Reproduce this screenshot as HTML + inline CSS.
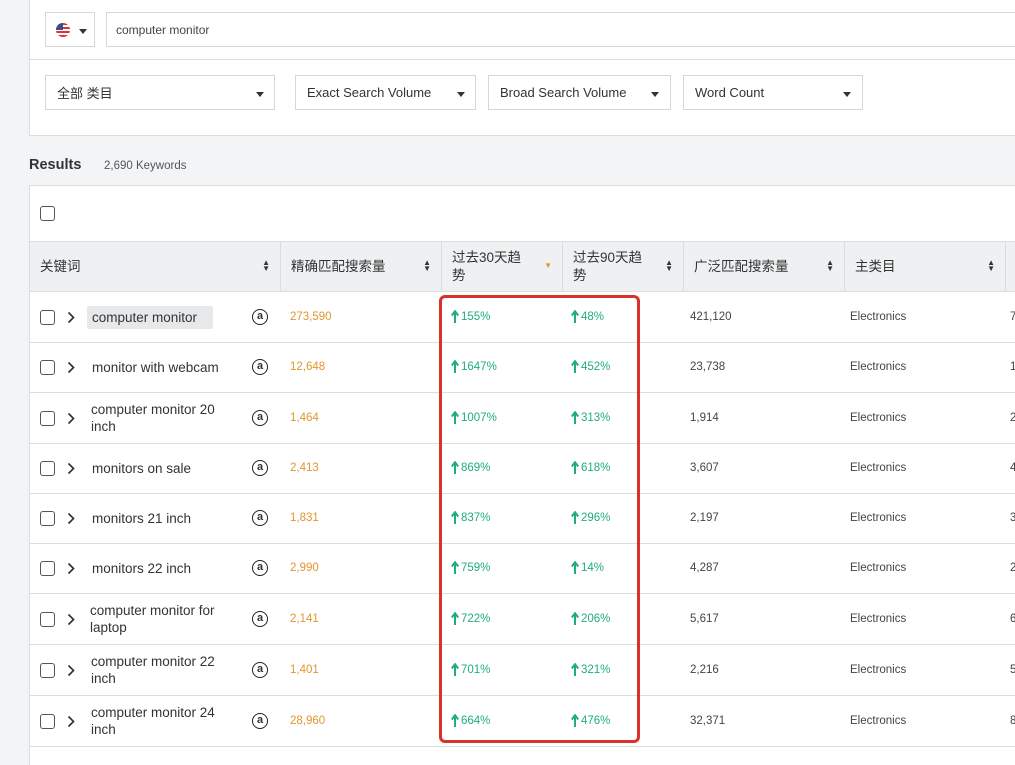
<!DOCTYPE html>
<html><head><meta charset="utf-8"><style>
*{box-sizing:border-box;margin:0;padding:0}
body{width:1015px;height:754px;overflow:hidden;background:#f3f4f6;font-family:"Liberation Sans","Noto Sans CJK SC",sans-serif;color:#333;position:relative}
.abs{position:absolute}
.panel{left:29px;top:-2px;width:1000px;height:138px;background:#fff;border:1px solid #ddd}
.box{position:absolute;background:#fff;border:1px solid #d6d6d6;font-size:13px;color:#333;display:flex;align-items:center;padding-left:11px}
.caret{position:absolute;width:0;height:0;border-left:4px solid transparent;border-right:4px solid transparent;border-top:5px solid #333}
.table{left:29px;top:185px;width:1000px;height:580px;background:#fff;border-left:1px solid #ddd;border-top:1px solid #ddd}
.hdr{left:30px;top:241px;width:990px;height:51px;background:#eef0f2;border-top:1px solid #ddd;border-bottom:1px solid #ddd}
.hc{position:absolute;top:241px;height:51px;border-left:1px solid #dcdcdc;font-size:13.5px;color:#333;padding:6px 10px;display:flex;align-items:center;line-height:18px}
.sort{position:absolute;right:10px;top:19px;font-size:8px;line-height:6px;color:#333}
.row{position:absolute;left:30px;width:990px;border-bottom:1px solid #ddd}
.cb{position:absolute;width:15px;height:15px;border:1.5px solid #555;border-radius:3px;background:#fff}
.t{position:absolute;font-size:13px;white-space:nowrap}
.kw{font-size:13.5px;color:#333;line-height:17px;white-space:normal}
.or{color:#e0962e;font-size:11.5px}
.gr{color:#1fae7a;font-size:11.5px;display:flex;align-items:center;gap:2px}
.gy{color:#444;font-size:11.5px}
.ch{position:absolute;left:67px}
.am{position:absolute;left:252px;width:16px;height:16px;border:1.6px solid #222;border-radius:50%;font-size:11px;font-weight:bold;text-align:center;line-height:12px}
</style></head><body>
<div class="abs panel"></div>
<div class="abs" style="left:30px;top:59px;width:990px;height:1px;background:#ddd"></div>
<div class="box" style="left:45px;top:12px;width:50px;height:35px"></div>
<div class="abs" style="left:56px;top:23px;width:14px;height:14px;border-radius:50%;overflow:hidden;background:repeating-linear-gradient(#d33 0 2px,#fff 2px 4px)"><div style="width:7px;height:7px;background:#3b4c8c"></div></div>
<div class="caret" style="left:79px;top:29px"></div>
<div class="box" style="left:106px;top:12px;width:920px;height:35px;padding-left:9px;font-size:12px;color:#444">computer monitor</div>
<div class="box" style="left:45px;top:75px;width:230px;height:35px;font-size:13px">全部 类目</div>
<div class="caret" style="left:256px;top:92px"></div>
<div class="box" style="left:295px;top:75px;width:181px;height:35px">Exact Search Volume</div>
<div class="caret" style="left:457px;top:92px"></div>
<div class="box" style="left:488px;top:75px;width:183px;height:35px">Broad Search Volume</div>
<div class="caret" style="left:651px;top:92px"></div>
<div class="box" style="left:683px;top:75px;width:180px;height:35px">Word Count</div>
<div class="caret" style="left:843px;top:92px"></div>
<div class="t" style="left:29px;top:157px;font-size:14.5px;font-weight:bold;color:#333">Results</div>
<div class="t" style="left:104px;top:160px;font-size:11.5px;color:#555">2,690 Keywords</div>
<div class="abs table"></div>
<div class="cb" style="left:40px;top:206px"></div>
<div class="abs hdr"></div>
<div class="hc" style="left:30px;width:250px;border-left:none">关键词<span class="sort">▲<br>▼</span></div>
<div class="hc" style="left:280px;width:161px">精确匹配搜索量<span class="sort">▲<br>▼</span></div>
<div class="hc" style="left:441px;width:121px">过去30天趋<br>势<span class="sort" style="color:#e0962e;top:22px">▼</span></div>
<div class="hc" style="left:562px;width:121px;padding-right:28px">过去90天趋<br>势<span class="sort">▲<br>▼</span></div>
<div class="hc" style="left:683px;width:161px">广泛匹配搜索量<span class="sort">▲<br>▼</span></div>
<div class="hc" style="left:844px;width:161px">主类目<span class="sort">▲<br>▼</span></div>
<div class="hc" style="left:1005px;width:20px"></div>

<div class="row" style="top:292px;height:51px"></div>
<div class="row" style="top:343px;height:50px"></div>
<div class="row" style="top:393px;height:51px"></div>
<div class="row" style="top:444px;height:50px"></div>
<div class="row" style="top:494px;height:50px"></div>
<div class="row" style="top:544px;height:50px"></div>
<div class="row" style="top:594px;height:51px"></div>
<div class="row" style="top:645px;height:51px"></div>
<div class="row" style="top:696px;height:51px"></div>

<div class="abs" style="left:87px;top:306px;width:126px;height:23px;background:#e6e8ea;border-radius:2px"></div>

<div class="cb" style="left:40px;top:310px"></div><svg class="ch" style="top:311px" width="8" height="13"><path d="M1.5 1.5L6.5 6.5L1.5 11.5" fill="none" stroke="#333" stroke-width="1.7"/></svg>
<div class="t kw" style="left:92px;top:309px">computer monitor</div>
<div class="cb" style="left:40px;top:360px"></div><svg class="ch" style="top:361px" width="8" height="13"><path d="M1.5 1.5L6.5 6.5L1.5 11.5" fill="none" stroke="#333" stroke-width="1.7"/></svg>
<div class="t kw" style="left:92px;top:359px">monitor with webcam</div>
<div class="cb" style="left:40px;top:411px"></div><svg class="ch" style="top:412px" width="8" height="13"><path d="M1.5 1.5L6.5 6.5L1.5 11.5" fill="none" stroke="#333" stroke-width="1.7"/></svg>
<div class="t kw" style="left:91px;top:401px;width:150px">computer monitor 20 inch</div>
<div class="cb" style="left:40px;top:461px"></div><svg class="ch" style="top:462px" width="8" height="13"><path d="M1.5 1.5L6.5 6.5L1.5 11.5" fill="none" stroke="#333" stroke-width="1.7"/></svg>
<div class="t kw" style="left:92px;top:460px">monitors on sale</div>
<div class="cb" style="left:40px;top:511px"></div><svg class="ch" style="top:512px" width="8" height="13"><path d="M1.5 1.5L6.5 6.5L1.5 11.5" fill="none" stroke="#333" stroke-width="1.7"/></svg>
<div class="t kw" style="left:92px;top:510px">monitors 21 inch</div>
<div class="cb" style="left:40px;top:561px"></div><svg class="ch" style="top:562px" width="8" height="13"><path d="M1.5 1.5L6.5 6.5L1.5 11.5" fill="none" stroke="#333" stroke-width="1.7"/></svg>
<div class="t kw" style="left:92px;top:560px">monitors 22 inch</div>
<div class="cb" style="left:40px;top:612px"></div><svg class="ch" style="top:613px" width="8" height="13"><path d="M1.5 1.5L6.5 6.5L1.5 11.5" fill="none" stroke="#333" stroke-width="1.7"/></svg>
<div class="t kw" style="left:90px;top:602px;width:150px">computer monitor for laptop</div>
<div class="cb" style="left:40px;top:663px"></div><svg class="ch" style="top:664px" width="8" height="13"><path d="M1.5 1.5L6.5 6.5L1.5 11.5" fill="none" stroke="#333" stroke-width="1.7"/></svg>
<div class="t kw" style="left:91px;top:653px;width:150px">computer monitor 22 inch</div>
<div class="cb" style="left:40px;top:714px"></div><svg class="ch" style="top:715px" width="8" height="13"><path d="M1.5 1.5L6.5 6.5L1.5 11.5" fill="none" stroke="#333" stroke-width="1.7"/></svg>
<div class="t kw" style="left:91px;top:704px;width:150px">computer monitor 24 inch</div>

<div class="am" style="top:309px">a</div>
<div class="am" style="top:359px">a</div>
<div class="am" style="top:410px">a</div>
<div class="am" style="top:460px">a</div>
<div class="am" style="top:510px">a</div>
<div class="am" style="top:560px">a</div>
<div class="am" style="top:611px">a</div>
<div class="am" style="top:662px">a</div>
<div class="am" style="top:713px">a</div>

<div class="t or" style="left:290px;top:311px">273,590</div><div class="t gr" style="left:451px;top:310px"><svg width="8" height="13"><path d="M4 13V2M0.8 5.5L4 1.2L7.2 5.5" fill="none" stroke="#1fae7a" stroke-width="2"/></svg>155%</div><div class="t gr" style="left:571px;top:310px"><svg width="8" height="13"><path d="M4 13V2M0.8 5.5L4 1.2L7.2 5.5" fill="none" stroke="#1fae7a" stroke-width="2"/></svg>48%</div><div class="t gy" style="left:690px;top:311px">421,120</div><div class="t gy" style="left:850px;top:311px">Electronics</div><div class="t gy" style="left:1010px;top:311px">7</div>
<div class="t or" style="left:290px;top:361px">12,648</div><div class="t gr" style="left:451px;top:360px"><svg width="8" height="13"><path d="M4 13V2M0.8 5.5L4 1.2L7.2 5.5" fill="none" stroke="#1fae7a" stroke-width="2"/></svg>1647%</div><div class="t gr" style="left:571px;top:360px"><svg width="8" height="13"><path d="M4 13V2M0.8 5.5L4 1.2L7.2 5.5" fill="none" stroke="#1fae7a" stroke-width="2"/></svg>452%</div><div class="t gy" style="left:690px;top:361px">23,738</div><div class="t gy" style="left:850px;top:361px">Electronics</div><div class="t gy" style="left:1010px;top:361px">1</div>
<div class="t or" style="left:290px;top:412px">1,464</div><div class="t gr" style="left:451px;top:411px"><svg width="8" height="13"><path d="M4 13V2M0.8 5.5L4 1.2L7.2 5.5" fill="none" stroke="#1fae7a" stroke-width="2"/></svg>1007%</div><div class="t gr" style="left:571px;top:411px"><svg width="8" height="13"><path d="M4 13V2M0.8 5.5L4 1.2L7.2 5.5" fill="none" stroke="#1fae7a" stroke-width="2"/></svg>313%</div><div class="t gy" style="left:690px;top:412px">1,914</div><div class="t gy" style="left:850px;top:412px">Electronics</div><div class="t gy" style="left:1010px;top:412px">2</div>
<div class="t or" style="left:290px;top:462px">2,413</div><div class="t gr" style="left:451px;top:461px"><svg width="8" height="13"><path d="M4 13V2M0.8 5.5L4 1.2L7.2 5.5" fill="none" stroke="#1fae7a" stroke-width="2"/></svg>869%</div><div class="t gr" style="left:571px;top:461px"><svg width="8" height="13"><path d="M4 13V2M0.8 5.5L4 1.2L7.2 5.5" fill="none" stroke="#1fae7a" stroke-width="2"/></svg>618%</div><div class="t gy" style="left:690px;top:462px">3,607</div><div class="t gy" style="left:850px;top:462px">Electronics</div><div class="t gy" style="left:1010px;top:462px">4</div>
<div class="t or" style="left:290px;top:512px">1,831</div><div class="t gr" style="left:451px;top:511px"><svg width="8" height="13"><path d="M4 13V2M0.8 5.5L4 1.2L7.2 5.5" fill="none" stroke="#1fae7a" stroke-width="2"/></svg>837%</div><div class="t gr" style="left:571px;top:511px"><svg width="8" height="13"><path d="M4 13V2M0.8 5.5L4 1.2L7.2 5.5" fill="none" stroke="#1fae7a" stroke-width="2"/></svg>296%</div><div class="t gy" style="left:690px;top:512px">2,197</div><div class="t gy" style="left:850px;top:512px">Electronics</div><div class="t gy" style="left:1010px;top:512px">3</div>
<div class="t or" style="left:290px;top:562px">2,990</div><div class="t gr" style="left:451px;top:561px"><svg width="8" height="13"><path d="M4 13V2M0.8 5.5L4 1.2L7.2 5.5" fill="none" stroke="#1fae7a" stroke-width="2"/></svg>759%</div><div class="t gr" style="left:571px;top:561px"><svg width="8" height="13"><path d="M4 13V2M0.8 5.5L4 1.2L7.2 5.5" fill="none" stroke="#1fae7a" stroke-width="2"/></svg>14%</div><div class="t gy" style="left:690px;top:562px">4,287</div><div class="t gy" style="left:850px;top:562px">Electronics</div><div class="t gy" style="left:1010px;top:562px">2</div>
<div class="t or" style="left:290px;top:613px">2,141</div><div class="t gr" style="left:451px;top:612px"><svg width="8" height="13"><path d="M4 13V2M0.8 5.5L4 1.2L7.2 5.5" fill="none" stroke="#1fae7a" stroke-width="2"/></svg>722%</div><div class="t gr" style="left:571px;top:612px"><svg width="8" height="13"><path d="M4 13V2M0.8 5.5L4 1.2L7.2 5.5" fill="none" stroke="#1fae7a" stroke-width="2"/></svg>206%</div><div class="t gy" style="left:690px;top:613px">5,617</div><div class="t gy" style="left:850px;top:613px">Electronics</div><div class="t gy" style="left:1010px;top:613px">6</div>
<div class="t or" style="left:290px;top:664px">1,401</div><div class="t gr" style="left:451px;top:663px"><svg width="8" height="13"><path d="M4 13V2M0.8 5.5L4 1.2L7.2 5.5" fill="none" stroke="#1fae7a" stroke-width="2"/></svg>701%</div><div class="t gr" style="left:571px;top:663px"><svg width="8" height="13"><path d="M4 13V2M0.8 5.5L4 1.2L7.2 5.5" fill="none" stroke="#1fae7a" stroke-width="2"/></svg>321%</div><div class="t gy" style="left:690px;top:664px">2,216</div><div class="t gy" style="left:850px;top:664px">Electronics</div><div class="t gy" style="left:1010px;top:664px">5</div>
<div class="t or" style="left:290px;top:715px">28,960</div><div class="t gr" style="left:451px;top:714px"><svg width="8" height="13"><path d="M4 13V2M0.8 5.5L4 1.2L7.2 5.5" fill="none" stroke="#1fae7a" stroke-width="2"/></svg>664%</div><div class="t gr" style="left:571px;top:714px"><svg width="8" height="13"><path d="M4 13V2M0.8 5.5L4 1.2L7.2 5.5" fill="none" stroke="#1fae7a" stroke-width="2"/></svg>476%</div><div class="t gy" style="left:690px;top:715px">32,371</div><div class="t gy" style="left:850px;top:715px">Electronics</div><div class="t gy" style="left:1010px;top:715px">8</div>

<div class="abs" style="left:439px;top:295px;width:201px;height:448px;border:3px solid #d9322b;border-radius:6px"></div>
</body></html>
